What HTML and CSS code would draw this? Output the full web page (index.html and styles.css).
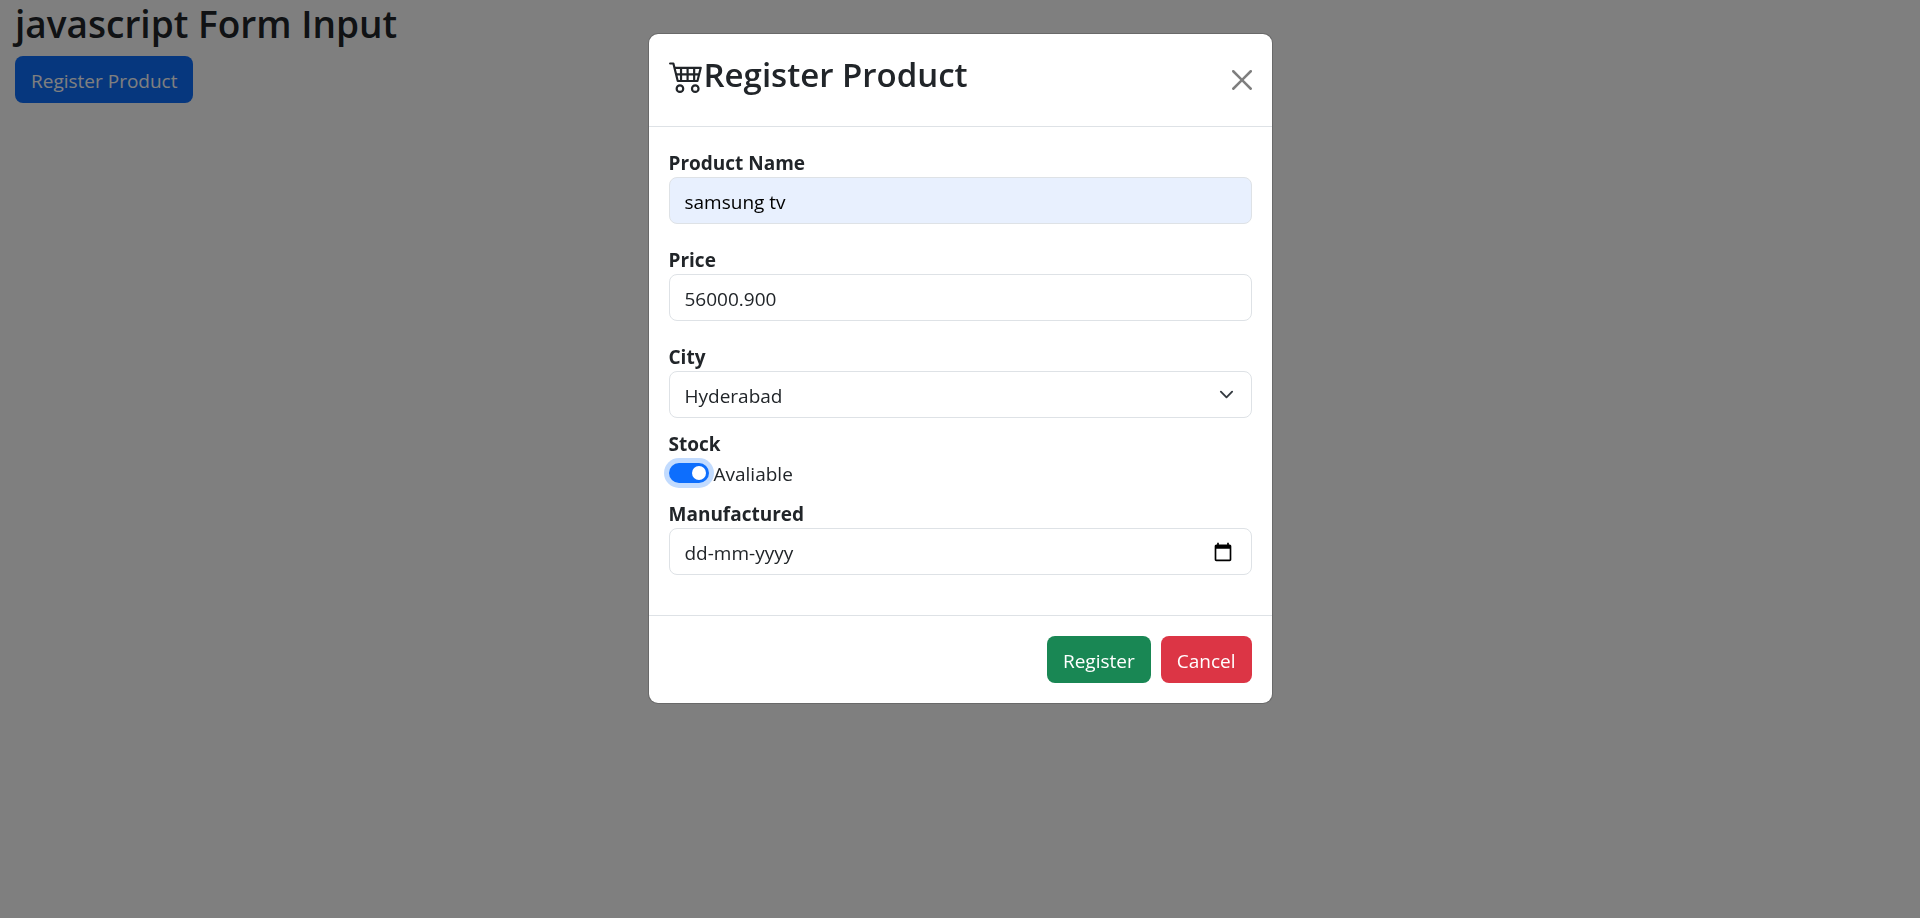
FILE: index.html
```html
<!DOCTYPE html>
<html lang="en">
<head>
<meta charset="utf-8">
<meta name="viewport" content="width=device-width, initial-scale=1">
<title>javascript Form Input</title>
<link rel="stylesheet" href="styles.css">
</head>
<body>
<main class="page">
  <h1 class="page-title">javascript Form Input</h1>
  <button type="button" class="btn btn-primary">Register Product</button>
</main>
<div class="backdrop">
  <form class="modal" role="dialog" aria-modal="true" aria-labelledby="modal-title">
    <header class="modal-header">
      <h2 class="modal-title" id="modal-title">
        <svg class="cart" viewBox="0 0 16 16" fill="currentColor" aria-hidden="true"><path d="M0 2.500A.5.5 0 0 1 .5 2H2a.5.5 0 0 1 .485.379L2.890 4H14.500a.5.5 0 0 1 .485.621l-1.500 6A.5.5 0 0 1 13 11H4a.5.5 0 0 1-.485-.379L1.610 3H.5a.5.5 0 0 1-.5-.5M3.140 5l.5 2H5V5zM6 5v2h2V5zm3 0v2h2V5zm3 0v2h1.360l.5-2zm1.110 3H12v2h.610zM11 8H9v2h2zM8 8H6v2h2zM5 8H3.890l.5 2H5zm0 5a1 1 0 1 0 0 2 1 1 0 0 0 0-2m-2 1a2 2 0 1 1 4 0 2 2 0 0 1-4 0m9-1a1 1 0 1 0 0 2 1 1 0 0 0 0-2m-2 1a2 2 0 1 1 4 0 2 2 0 0 1-4 0"/></svg>
        <span>Register Product</span>
      </h2>
      <button type="button" class="btn-close" aria-label="Close">
        <svg class="close-icon" viewBox="0 0 16 16" aria-hidden="true"><path d="M.293.293a1 1 0 0 1 1.414 0L8 6.586 14.293.293a1 1 0 1 1 1.414 1.414L9.414 8l6.293 6.293a1 1 0 0 1-1.414 1.414L8 9.414l-6.293 6.293a1 1 0 0 1-1.414-1.414L6.586 8 .293 1.707a1 1 0 0 1 0-1.414"/></svg>
      </button>
    </header>
    <div class="modal-body">
      <div class="field field-spaced">
        <label class="label" for="name">Product Name</label>
        <input class="control control-filled" id="name" type="text" value="samsung tv">
      </div>
      <div class="field field-spaced">
        <label class="label" for="price">Price</label>
        <input class="control" id="price" type="text" inputmode="decimal" value="56000.900">
      </div>
      <div class="field">
        <label class="label" for="city">City</label>
        <div class="select-wrap">
          <select class="control" id="city">
            <option>Hyderabad</option>
          </select>
          <svg class="chevron" viewBox="0 0 16 16" aria-hidden="true"><path d="m2 5 6 6 6-6"/></svg>
        </div>
      </div>
      <div class="field">
        <label class="label" for="stock">Stock</label>
        <div class="switch-row">
          <input class="switch" id="stock" type="checkbox" role="switch" checked>
          <label class="switch-label" for="stock">Avaliable</label>
        </div>
      </div>
      <div class="field">
        <label class="label" for="date">Manufactured</label>
        <div class="control date">
          <input class="date-input" id="date" type="text" placeholder="dd-mm-yyyy">
          <button type="button" class="date-btn" aria-label="Choose date">
            <svg class="calendar" viewBox="0 0 24 24" aria-hidden="true"><path d="M20 3h-1V1h-2v2H7V1H5v2H4c-1.100 0-2 .9-2 2v16c0 1.100.9 2 2 2h16c1.100 0 2-.9 2-2V5c0-1.100-.9-2-2-2zm0 18H4V8h16v13z"/></svg>
          </button>
        </div>
      </div>
    </div>
    <footer class="modal-footer">
      <button type="button" class="btn btn-success">Register</button>
      <button type="button" class="btn btn-danger">Cancel</button>
    </footer>
  </form>
</div>
</body>
</html>
```
FILE: styles.css
```css
*, *::before, *::after { box-sizing: border-box; }

body {
  margin: 0;
  background: #fff;
  color: #212529;
  font: 19px/30px "Open Sans", "Noto Sans", sans-serif;
}

button, input, select { font: inherit; color: inherit; }

.page { padding: 0 15px; }

.page-title {
  margin: 0 0 8px;
  font-size: 37px;
  font-weight: 600;
  line-height: 48px;
}

.btn {
  padding: 9px 15px 6px;
  border: 1px solid transparent;
  border-radius: 8px;
  color: #fff;
}

.btn-primary { background: #0d6efd; }
.btn-success { background: #198754; }
.btn-danger { background: #dc3545; }

.backdrop {
  position: fixed;
  inset: 0;
  overflow: auto;
  padding: 33px 15px;
  background: rgba(0, 0, 0, 0.5);
}

.modal {
  max-width: 625px;
  margin: 0 auto;
  border: 1px solid rgba(0, 0, 0, 0.175);
  border-radius: 10px;
  background: #fff;
  background-clip: padding-box;
}

.modal-header {
  display: flex;
  align-items: center;
  justify-content: space-between;
  padding: 20px;
  border-bottom: 1px solid #dee2e6;
}

.modal-title {
  display: flex;
  align-items: center;
  margin: 0 0 10px;
  font-size: 33px;
  font-weight: 600;
  line-height: 42px;
}

.cart { width: 35px; height: 35px; }

.btn-close {
  display: flex;
  padding: 10px;
  margin-right: -10px;
  border: 0;
  background: none;
  opacity: 0.5;
}

.close-icon { width: 20px; height: 20px; }

.modal-body { padding: 20px 20px 30px; }

.field { margin-bottom: 10px; }
.field-spaced { margin-bottom: 20px; }

.label {
  display: block;
  padding-top: 2px;
  font-weight: 700;
  line-height: 28px;
}

.control {
  display: block;
  width: 100%;
  height: 47px;
  padding: 9px 15px 6px;
  border: 1px solid #dee2e6;
  border-radius: 8px;
  background: #fff;
  appearance: none;
}

.control-filled {
  background: #e8f0fe;
  color: #000;
}

.select-wrap { display: grid; align-items: center; }
.select-wrap > * { grid-area: 1 / 1; }

.chevron {
  width: 15px;
  height: 15px;
  margin-right: 18px;
  justify-self: end;
  fill: none;
  stroke: #343a40;
  stroke-width: 2;
  stroke-linecap: round;
  stroke-linejoin: round;
  pointer-events: none;
}

.switch-row {
  display: flex;
  align-items: center;
  gap: 5px;
}

.switch-label { padding-top: 2px; line-height: 28px; }

.switch {
  display: flex;
  align-items: center;
  justify-content: flex-end;
  width: 40px;
  height: 20px;
  margin: 0;
  padding: 3px;
  border-radius: 20px;
  background: #0d6efd;
  box-shadow: 0 0 0 5px rgba(13, 110, 253, 0.25);
  appearance: none;
}

.switch::before {
  content: "";
  width: 14px;
  height: 14px;
  border-radius: 50%;
  background: #fff;
}

.switch:not(:checked) {
  justify-content: flex-start;
  background: #adb5bd;
}

.date { display: flex; align-items: center; }

.date-input {
  flex: 1;
  min-width: 0;
  padding: 0;
  border: 0;
  outline: 0;
  background: none;
}

.date-input::placeholder { color: #212529; opacity: 1; }

.date-btn {
  display: flex;
  padding: 0 3px 2px;
  border: 0;
  background: none;
}

.calendar { width: 20px; height: 20px; fill: #000; }

.modal-footer {
  display: flex;
  justify-content: flex-end;
  gap: 10px;
  padding: 20px;
  border-top: 1px solid #dee2e6;
}
```
